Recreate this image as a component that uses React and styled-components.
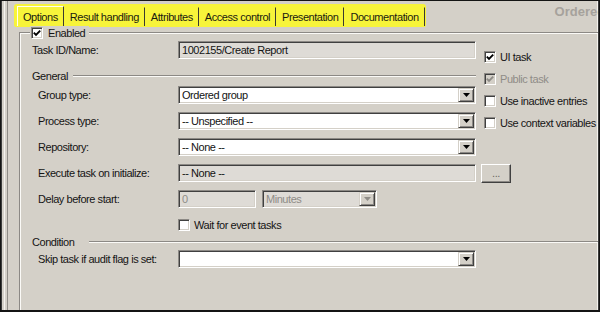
import React from 'react';
import styled, { createGlobalStyle } from 'styled-components';

const face = '#d4d0c8';
const shadow = '#8c8985';
const dark = '#404040';
const disabledText = '#8f8c87';

const Global = createGlobalStyle`
  html, body { margin: 0; padding: 0; background: ${face}; }
  body {
    font-family: "Liberation Sans", Arial, sans-serif;
    font-size: 11px;
    letter-spacing: -0.45px;
    color: #141414;
  }
  * { box-sizing: border-box; }
`;

const Window = styled.div`
  width: 600px;
  height: 312px;
  display: flex;
  overflow: hidden;
  background: ${face};
  border: 1px solid #141414;
  border-bottom-width: 2px;
`;

const Rail = styled.div`
  width: 8px;
  flex-shrink: 0;
  background: linear-gradient(
    to right,
    #3c3c3c 0 1px,
    ${face} 1px 3px,
    #f4f2ee 3px 4px,
    ${face} 4px 6px,
    #8e8b86 6px 7px,
    ${face} 7px
  );
`;

const Main = styled.div`
  flex: 1;
  min-width: 0;
  display: flex;
  flex-direction: column;
  overflow: hidden;
  border-right: 1px solid #3a3a3a;
  box-shadow: inset -1px 0 #f4f2ee;
`;

const Header = styled.div`
  height: 26px;
  flex-shrink: 0;
  display: flex;
  align-items: flex-end;
  padding-left: 5px;
  overflow: hidden;
`;

const Tabs = styled.div`
  display: flex;
  align-items: flex-end;
  height: 23px;
  padding: 0 1px 0 3px;
  background: #f7f43a;
  border-radius: 3px 3px 2px 2px;
  flex-shrink: 0;
`;

const Tab = styled.div`
  height: ${(p) => (p.$active ? 20 : 19)}px;
  display: flex;
  align-items: center;
  padding: 0 5px;
  border-left: 1px solid ${(p) => (p.$active ? '#fffff0' : 'transparent')};
  border-top: 1px solid ${(p) => (p.$active ? '#fffff0' : 'transparent')};
  border-right: 1px solid #3a3a30;
  white-space: nowrap;
  color: #1a1a10;
  margin-bottom: 1px;
`;

const Title = styled.div`
  align-self: flex-start;
  margin-top: 3px;
  margin-left: 129px;
  font-weight: bold;
  font-size: 13px;
  letter-spacing: 0;
  color: #a6a29c;
  white-space: nowrap;
  flex-shrink: 0;
`;

const GroupBox = styled.div`
  flex: 1;
  margin: 5px 0 0 10px;
  border-top: 1px solid ${shadow};
  border-left: 1px solid ${shadow};
  box-shadow: inset 1px 1px #fbfaf7;
  display: flex;
  flex-direction: column;
`;

const Legend = styled.div`
  margin: -7px 0 0 10px;
  height: 13px;
  width: fit-content;
  display: flex;
  align-items: center;
  gap: 5px;
  padding: 0 4px 0 1px;
  background: ${face};
`;

const TopGrid = styled.div`
  margin-top: 2px;
  display: grid;
  grid-template-columns: 456px 1fr;
  column-gap: 8px;
`;

const LeftCol = styled.div`
  display: flex;
  flex-direction: column;
  padding-left: 12px;
`;

const RightCol = styled.div`
  display: flex;
  flex-direction: column;
  gap: 8px;
  padding-top: 9px;
`;

const CheckRow = styled.label`
  display: flex;
  align-items: center;
  gap: 4px;
  height: 14px;
  white-space: nowrap;
  color: ${(p) => (p.$disabled ? disabledText : 'inherit')};
  padding-left: ${(p) => p.$indent || 0}px;
  margin-top: ${(p) => p.$top || 0}px;
`;

const Box = styled.span`
  width: 12px;
  height: 12px;
  flex-shrink: 0;
  display: flex;
  align-items: center;
  justify-content: center;
  background: ${(p) => (p.$disabled ? face : '#fff')};
  border: 1px solid;
  border-color: ${shadow} #fff #fff ${shadow};
  box-shadow: inset 1px 1px ${dark}, inset -1px -1px ${face};
`;

const SectionHeader = styled.div`
  display: flex;
  align-items: center;
  gap: ${(p) => p.$gap}px;
  height: 13px;
  margin-top: ${(p) => p.$top}px;
`;

const Rule = styled.div`
  flex: 1;
  height: 2px;
  border-top: 1px solid ${shadow};
  border-bottom: 1px solid #fbfaf7;
`;

const Row = styled.div`
  display: flex;
  align-items: center;
  height: 18px;
  margin-top: ${(p) => p.$top || 0}px;
`;

const Label = styled.div`
  width: ${(p) => (p.$sub ? 140 : 146)}px;
  margin-left: ${(p) => (p.$sub ? 6 : 0)}px;
  flex-shrink: 0;
  white-space: nowrap;
`;

const Field = styled.div`
  width: ${(p) => p.$w || 298}px;
  height: 18px;
  flex-shrink: 0;
  display: flex;
  align-items: center;
  padding: 0 1px 0 3px;
  background: ${(p) => (p.$ro ? '#dedbd6' : '#fff')};
  color: ${(p) => (p.$dim ? disabledText : 'inherit')};
  border: 1px solid;
  border-color: ${shadow} #fff #fff ${shadow};
  box-shadow: inset 1px 1px ${dark}, inset -1px -1px ${face};
  white-space: nowrap;
  overflow: hidden;
`;

const FieldText = styled.span`
  flex: 1;
  overflow: hidden;
`;

const DropButton = styled.span`
  width: 16px;
  height: 14px;
  flex-shrink: 0;
  display: flex;
  align-items: center;
  justify-content: center;
  background: ${face};
  border: 1px solid;
  border-color: ${face} ${dark} ${dark} ${face};
  box-shadow: inset 1px 1px #fff, inset -1px -1px ${shadow};
`;

const PushButton = styled.div`
  width: 30px;
  height: 19px;
  margin-left: 5px;
  flex-shrink: 0;
  display: flex;
  align-items: center;
  justify-content: center;
  color: #6a6864;
  background: ${face};
  border: 1px solid;
  border-color: #fff ${dark} ${dark} #fff;
  box-shadow: inset -1px -1px ${shadow};
`;

const Gap = styled.span`
  width: 6px;
  flex-shrink: 0;
`;

const ConditionArea = styled.div`
  margin-top: 3px;
  padding-left: 12px;
  display: flex;
  flex-direction: column;
`;

const Check = ({ checked, disabled }) => (
  <Box $disabled={disabled}>
    {checked && (
      <svg width="8" height="8" viewBox="0 0 8 8">
        <polyline
          points="0.8,3.6 3,5.8 7.2,1.6"
          fill="none"
          stroke={disabled ? disabledText : '#000'}
          strokeWidth="1.9"
        />
      </svg>
    )}
  </Box>
);

const Arrow = ({ disabled }) => (
  <svg width="7" height="4" viewBox="0 0 7 4">
    <polygon points="0,0 7,0 3.5,4" fill={disabled ? disabledText : '#000'} />
  </svg>
);

const Combo = ({ value, w, disabled }) => (
  <Field $w={w} $ro={disabled} $dim={disabled}>
    <FieldText>{value}</FieldText>
    <DropButton>
      <Arrow disabled={disabled} />
    </DropButton>
  </Field>
);

const tabs = ['Options', 'Result handling', 'Attributes', 'Access control', 'Presentation', 'Documentation'];

export default function App() {
  return (
    <>
      <Global />
      <Window>
        <Rail />
        <Main>
          <Header>
            <Tabs>
              {tabs.map((t, i) => (
                <Tab key={t} $active={i === 0}>
                  {t}
                </Tab>
              ))}
            </Tabs>
            <Title>Ordered group</Title>
          </Header>
          <GroupBox>
            <Legend>
              <Check checked />
              <span>Enabled</span>
            </Legend>
            <TopGrid>
              <LeftCol>
                <Row>
                  <Label>Task ID/Name:</Label>
                  <Field $ro>1002155/Create Report</Field>
                </Row>
                <SectionHeader $gap={5} $top={10}>
                  <span>General</span>
                  <Rule />
                </SectionHeader>
                <Row $top={4}>
                  <Label $sub>Group type:</Label>
                  <Combo value="Ordered group" />
                </Row>
                <Row $top={8}>
                  <Label $sub>Process type:</Label>
                  <Combo value="-- Unspecified --" />
                </Row>
                <Row $top={8}>
                  <Label $sub>Repository:</Label>
                  <Combo value="-- None --" />
                </Row>
                <Row $top={8}>
                  <Label $sub>Execute task on initialize:</Label>
                  <Field $ro>-- None --</Field>
                  <PushButton>...</PushButton>
                </Row>
                <Row $top={8}>
                  <Label $sub>Delay before start:</Label>
                  <Field $w={78} $ro $dim>0</Field>
                  <Gap />
                  <Combo value="Minutes" w={115} disabled />
                </Row>
                <CheckRow $indent={146} $top={10}>
                  <Check />
                  <span>Wait for event tasks</span>
                </CheckRow>
              </LeftCol>
              <RightCol>
                <CheckRow>
                  <Check checked />
                  <span>UI task</span>
                </CheckRow>
                <CheckRow $disabled>
                  <Check checked disabled />
                  <span>Public task</span>
                </CheckRow>
                <CheckRow>
                  <Check />
                  <span>Use inactive entries</span>
                </CheckRow>
                <CheckRow>
                  <Check />
                  <span>Use context variables</span>
                </CheckRow>
              </RightCol>
            </TopGrid>
            <ConditionArea>
              <SectionHeader $gap={15} $top={0}>
                <span>Condition</span>
                <Rule />
              </SectionHeader>
              <Row $top={2}>
                <Label $sub>Skip task if audit flag is set:</Label>
                <Combo value="" />
              </Row>
            </ConditionArea>
          </GroupBox>
        </Main>
      </Window>
    </>
  );
}
